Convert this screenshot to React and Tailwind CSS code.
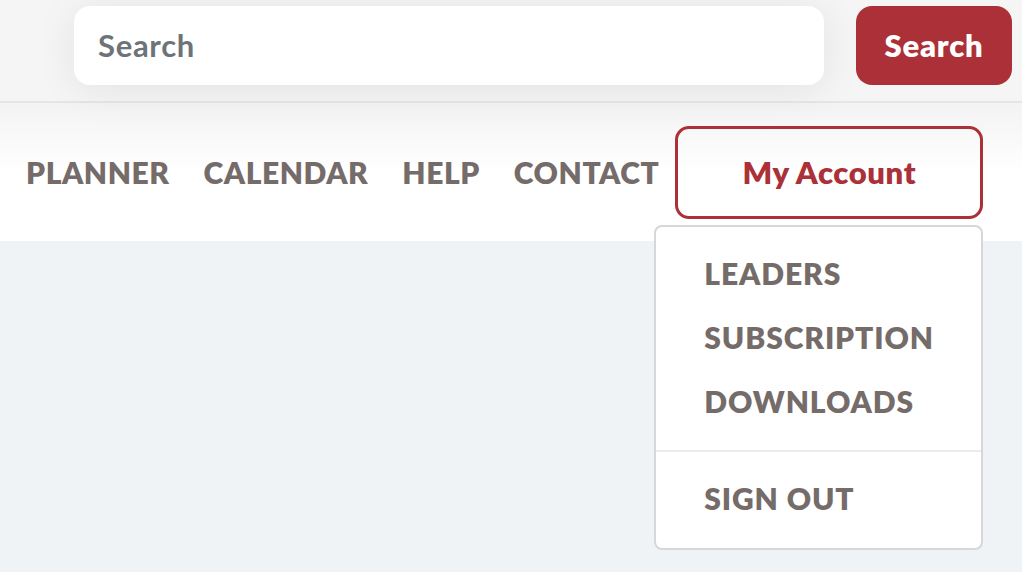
import React from 'react';

const navItems = ['PLANNER', 'CALENDAR', 'HELP', 'CONTACT'];
const menuItems = ['LEADERS', 'SUBSCRIPTION', 'DOWNLOADS'];

const App = () => {
    return (
        <div className="min-h-[572px] bg-[#f0f3f6] font-['Lato','Liberation_Sans',sans-serif]">
            {/* search bar */}
            <div className="h-[103px] bg-[#f5f5f5] border-b-2 border-[#e3e6ea] flex items-start pt-[6px] pl-[74px] pr-[10px] gap-[32px]">
                <div className="w-[750px] h-[79px] bg-white rounded-[16px] shadow-[0_4px_40px_rgba(0,0,0,0.08)] flex items-center px-[24px]">
                    <span className="text-[31px] font-bold tracking-[0.7px] text-[#6e7379]">Search</span>
                </div>
                <button className="w-[156px] h-[79px] bg-[#ab3037] rounded-[16px] text-white text-[31px] font-extrabold tracking-[0.8px]">
                    Search
                </button>
            </div>

            {/* nav row */}
            <div className="h-[138px] bg-gradient-to-b from-[#f3f3f3] via-white to-white flex items-center pl-[26px]">
                <div className="flex items-center gap-[34px] text-[30px] font-extrabold tracking-[0.55px] text-[#756b69]">
                    {navItems.map((item) => (
                        <span key={item}>{item}</span>
                    ))}
                </div>
                <div className="relative ml-[16px]">
                    <button className="w-[308px] h-[93px] border-[3px] border-[#ab3037] rounded-[14px] text-[#ab3037] text-[31px] font-extrabold tracking-[0.6px]">
                        My Account
                    </button>
                    <div className="absolute top-[99px] right-0 w-[329px] bg-white border-2 border-[#d5d7da] rounded-[8px] z-10 text-[30px] font-extrabold tracking-[0.9px] text-[#756b69]">
                        <div className="flex flex-col pl-[48px] pt-[30px] pb-[33px] gap-[32px]">
                            {menuItems.map((item) => (
                                <span key={item} className="leading-[32px]">{item}</span>
                            ))}
                        </div>
                        <div className="border-t-2 border-[#ebecef] pl-[48px] pt-[24px] pb-[27px]">
                            <span className="leading-[32px]">SIGN OUT</span>
                        </div>
                    </div>
                </div>
            </div>
        </div>
    );
};

export default App;
